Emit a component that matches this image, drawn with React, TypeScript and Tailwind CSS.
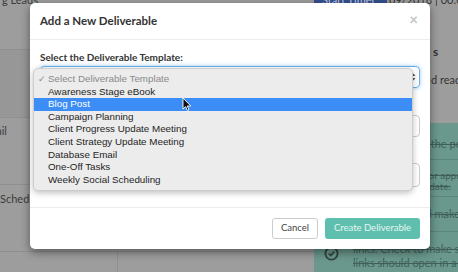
import * as React from 'react';

const options = [
  'Awareness Stage eBook',
  'Blog Post',
  'Campaign Planning',
  'Client Progress Update Meeting',
  'Client Strategy Update Meeting',
  'Database Email',
  'One-Off Tasks',
  'Weekly Social Scheduling',
];

const Cursor: React.FC = () => (
  <svg width="10" height="15" viewBox="0 0 10 15" className="absolute left-[152px] top-[94px]">
    <path
      d="M1 1 L1 12 L3.6 9.6 L5.4 13.6 L7 12.9 L5.3 9 L8.8 9 Z"
      fill="#111"
      stroke="#fff"
      strokeWidth="0.9"
      strokeLinejoin="round"
    />
  </svg>
);

const TemplateMenu: React.FC = () => (
  <div className="absolute left-[3px] top-[65px] w-[380px] py-[4px] bg-[#ececec] border border-[#cdcdcd] rounded-[5px] shadow-[0_2px_6px_rgba(0,0,0,0.25)] font-['Liberation_Sans',sans-serif] text-[9.8px]">
    <div className="h-[12.6px] flex items-center text-[#8a8a8a]">
      <span className="w-[14px] pl-[4px] text-[9px]">✓</span>
      <span>Select Deliverable Template</span>
    </div>
    {options.map((o) => (
      <div
        key={o}
        className={
          o === 'Blog Post'
            ? 'h-[12.6px] flex items-center pl-[14px] bg-[#3d8df6] text-white'
            : 'h-[12.6px] flex items-center pl-[14px] text-[#1e1e1e]'
        }
      >
        {o}
      </div>
    ))}
  </div>
);

const Modal: React.FC = () => (
  <div className="absolute left-[30px] top-[3px] w-[400px] h-[246px] bg-white rounded-[5px] shadow-[0_3px_10px_rgba(0,0,0,0.45)] flex flex-col font-['Lato',sans-serif]">
    <div className="h-[37px] shrink-0 border-b border-[#ececec] flex items-center justify-between pl-[10px] pr-[12px]">
      <h2 className="text-[11.5px] font-bold text-[#333]">Add a New Deliverable</h2>
      <span className="text-[15px] leading-none font-bold text-[#c4c4c4] -mt-[3px]">×</span>
    </div>
    <div className="flex-1 px-[10px] pt-[11px] flex flex-col">
      <label className="text-[10px] leading-[12px] font-bold text-[#333]">Select the Deliverable Template:</label>
      <div className="mt-[3px] h-[22px] border border-[#66afe9] rounded-[4px] shadow-[0_0_4px_rgba(102,175,233,0.6)] flex items-center justify-end pr-[3px]">
        <svg width="5" height="8" viewBox="0 0 5 8">
          <path d="M2.5 0.5 L4.5 3 L0.5 3 Z M2.5 7.5 L4.5 5 L0.5 5 Z" fill="#555" />
        </svg>
      </div>
      <div className="mt-[27px] h-[22px] border border-[#ccc] rounded-[4px]" />
      <div className="mt-[26px] h-[24px] border border-[#ccc] rounded-[4px]" />
    </div>
    <div className="h-[42px] shrink-0 border-t border-[#ececec] flex items-center justify-end gap-[7px] pr-[10px]">
      <button className="h-[21px] w-[46px] border border-[#ccc] rounded-[3px] bg-white text-[9.5px] text-[#444]">
        Cancel
      </button>
      <button className="h-[21px] w-[95px] rounded-[3px] bg-[#5fbfae] text-[9.5px] text-[#e6f6f2]">
        Create Deliverable
      </button>
    </div>
    <TemplateMenu />
    <Cursor />
  </div>
);

export default function App() {
  return (
    <div className="relative w-[458px] h-[272px] overflow-hidden flex font-['Lato',sans-serif] text-[11px]">
      <div className="w-[314px] shrink-0 bg-[#9d9d9d] flex flex-col text-[#3c3c3c]">
        <div className="h-[50px] shrink-0 border-b border-[#8f8f8f] pl-[2px]">
          <span className="block -mt-[6px] leading-[12px]">g Leads</span>
        </div>
        <div className="h-[68px] shrink-0 bg-[#979797] border-b border-[#8f8f8f]" />
        <div className="h-[67px] shrink-0 border-b border-[#8f8f8f] pt-[5px] -ml-[19px]">Email</div>
        <div className="h-[67px] shrink-0 border-b border-[#8f8f8f] pt-[6px]">Scheduling</div>
        <div className="flex-1 flex">
          <div className="w-[118px] border-r border-[#8f8f8f]" />
        </div>
      </div>
      <div className="flex-1 min-w-0 flex flex-col">
        <div className="h-[123px] shrink-0 bg-[#9d9d9d] text-[#333] flex flex-col">
          <div className="flex items-start h-[6px] overflow-hidden">
            <span className="shrink-0 w-[73px] h-[12px] -mt-[6px] bg-[#34508e] text-[#c9d1e6] text-[11px] leading-[12px] pl-[8px]">Start Timer</span>
            <span className="pl-[2px] -mt-[6px] text-[11px] leading-[12px] whitespace-nowrap">09/2018 | 00:02</span>
          </div>
          <div className="mt-[38px] pl-[119px] font-bold text-[12px] leading-[16px]">s</div>
          <div className="mt-[12px] pl-[117px] whitespace-nowrap leading-[16px]">d ready</div>
        </div>
        <div className="flex-1 bg-[#6a988d] text-[#3f5f58] flex flex-col whitespace-nowrap overflow-hidden">
          <div className="h-[37px] shrink-0 border-b border-[#5c877d] pl-[40px] pt-[13px] line-through">Upload &amp; share the post</div>
          <div className="h-[37px] shrink-0 border-b border-[#5c877d] pl-[40px] pt-[10px] leading-[11px] text-[10px]">
            <div className="line-through">Send it to client for approval</div>
            <div className="pl-[64px] line-through">update.</div>
          </div>
          <div className="h-[35px] shrink-0 border-b border-[#5c877d] pl-[40px] pt-[9px] line-through">Proofread it and make sure</div>
          <div className="flex gap-[14px] pl-[10px] pt-[10px]">
            <svg width="15" height="15" viewBox="0 0 16 16" className="shrink-0 mt-[4px]">
              <circle cx="8" cy="8" r="6.5" fill="none" stroke="#33443f" strokeWidth="2" />
              <path d="M5 8.2 L7.2 10.2 L11 6" fill="none" stroke="#33443f" strokeWidth="1.8" />
            </svg>
            <div className="leading-[14px] line-through">
              <div>links: Check to make sure</div>
              <div>links should open in a new</div>
            </div>
          </div>
        </div>
      </div>
      <Modal />
    </div>
  );
}
